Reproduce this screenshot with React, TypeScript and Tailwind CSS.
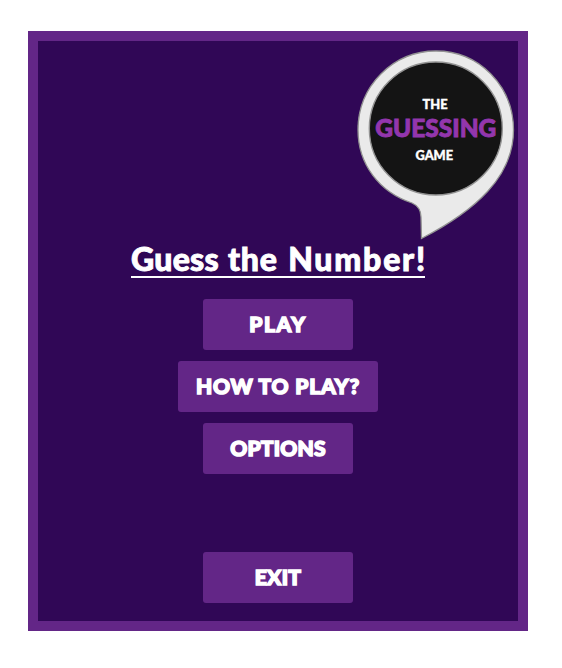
type MenuButtonProps = { label: string; width: string; tracking: string };

function MenuButton({ label, width, tracking }: MenuButtonProps) {
  return (
    <button
      className={`${width} flex h-[51px] items-center justify-center rounded-[3px] bg-[#632687] pb-[2px] text-[21px] leading-none font-black text-white [-webkit-text-stroke:1.5px_white]`}
    >
      <span className={`whitespace-nowrap ${tracking}`}>{label}</span>
    </button>
  );
}

function Logo() {
  return (
    <svg
      className="absolute top-[9px] right-[3px] h-[191px] w-[158px]"
      viewBox="357 50 158 191"
      textAnchor="middle"
      fontWeight="900"
    >
      <path
        d="M436 51 C479 51 513.5 86 513.5 130 C513.5 177 475 211 421.5 238.5 L421 217 Q421 207 412 203 C379 192 358 164 358 130 C358 86 393 51 436 51 Z"
        fill="#eaeaea"
        stroke="#929292"
        strokeWidth="1.3"
      />
      <circle cx="435.800" cy="128.500" r="66.500" fill="#141414" stroke="#929292" strokeWidth="1.4" />
      <text x="435" y="109" fontSize="12.500" fill="#fff" stroke="#fff" strokeWidth="0.4" textLength="25" lengthAdjust="spacingAndGlyphs">THE</text>
      <text x="435.800" y="136.500" fontSize="25.500" fill="#9336ad" stroke="#9336ad" strokeWidth="0.9" textLength="121" lengthAdjust="spacingAndGlyphs">GUESSING</text>
      <text x="434.300" y="160" fontSize="12.500" fill="#fff" stroke="#fff" strokeWidth="0.4" textLength="37.500" lengthAdjust="spacingAndGlyphs">GAME</text>
    </svg>
  );
}

export default function App() {
  return (
    <div className="h-[668px] w-[562px] bg-white pt-[31px] pl-[28px] font-[Lato,sans-serif]">
      <main className="relative flex h-[600px] w-[500px] flex-col items-center border-10 border-[#632687] bg-[#300756] pt-[202px]">
        <Logo />
        <h1 className="h-[35px] w-[294px] border-b-2 border-white text-[32px] leading-[32px] font-black whitespace-nowrap text-white [-webkit-text-stroke:0.9px_white]">
          <span className="tracking-[0.3px]">Guess </span>
          <span className="mr-[2px] ml-[1px] tracking-[0.8px]">the </span>
          <span className="tracking-[1.8px]">Number!</span>
        </h1>
        <nav className="flex grow flex-col items-center gap-[11px] pt-[21px] pb-[18px]">
          <MenuButton label="PLAY" width="w-[150px]" tracking="tracking-[1.6px]" />
          <MenuButton label="HOW TO PLAY?" width="w-[200px]" tracking="tracking-[0.8px]" />
          <MenuButton label="OPTIONS" width="w-[150px]" tracking="tracking-[0.2px]" />
          <div className="mt-auto">
            <MenuButton label="EXIT" width="w-[150px]" tracking="tracking-[0.3px]" />
          </div>
        </nav>
      </main>
    </div>
  );
}
